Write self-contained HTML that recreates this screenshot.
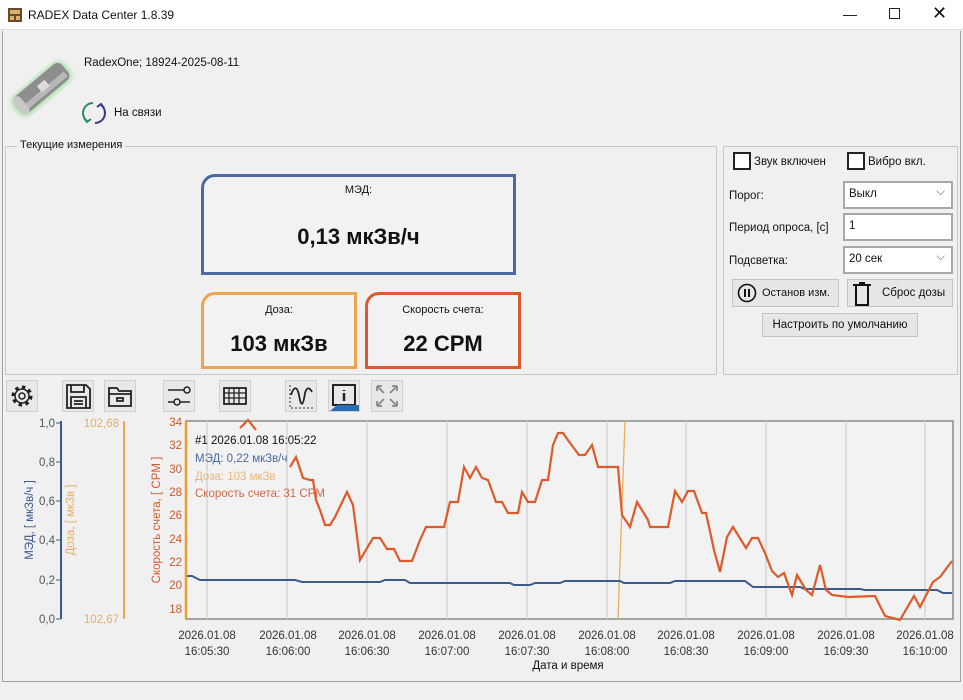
<!DOCTYPE html>
<html><head><meta charset="utf-8"><style>
*{box-sizing:border-box;margin:0;padding:0}
body{width:963px;height:700px;background:#f0f0f0;font-family:"Liberation Sans","DejaVu Sans",sans-serif;font-size:11.5px;color:#111;position:relative;overflow:hidden}
.abs{position:absolute;white-space:nowrap}
.title{left:0;top:0;width:963px;height:30px;background:#fff;border-bottom:1px solid #ddd}
.frame{left:2px;top:31px;width:959px;height:651px;border:1px solid #a0a0a0;border-top:none}
.group{border:1px solid #c8c8c8}
.card{background:#f2f2f2;text-align:center}
.inp{background:#fff;border:2px solid #a8a8a8;font-size:11.5px;padding:5px 4px}
.btn{background:#e6e6e6;border:1px solid #c4c4c4;font-size:11.5px}
.chk{width:18px;height:18px;border:2px solid #222;background:#fff}
.tb{width:32px;height:32px;background:#e8e8e8;border:1px solid #d0d0d0}
</style></head><body>
<div class="abs title">
 <svg class="abs" style="left:8px;top:8px" width="14" height="14"><rect x="0" y="0" width="14" height="14" fill="#6b4a2a"/><rect x="2" y="2" width="10" height="4" fill="#d8b070"/><rect x="2" y="8" width="4" height="4" fill="#d8b070"/><rect x="8" y="8" width="4" height="4" fill="#d8b070"/></svg>
 <div class="abs" style="left:28px;top:8px;font-size:12px">RADEX Data Center 1.8.39</div>
 <div class="abs" style="left:843px;top:6px;font-size:14px">—</div>
 <div class="abs" style="left:889px;top:8px;width:11px;height:11px;border:1px solid #222"></div>
 <div class="abs" style="left:932px;top:3px;font-size:18px">✕</div>
</div>
<div class="abs frame"></div>
<!-- device -->
<svg class="abs" style="left:6px;top:50px" width="70" height="75">
 <defs><filter id="g"><feGaussianBlur stdDeviation="3"/></filter></defs>
 <g transform="rotate(50 35 38)">
 <rect x="24" y="5" width="24" height="66" rx="9" fill="#7cd57c" filter="url(#g)" opacity=".7"/>
 <rect x="25" y="7" width="21" height="62" rx="6" fill="#8e8e8e"/>
 <rect x="37" y="10" width="6" height="54" fill="#b8b8b8"/>
 <rect x="31" y="30" width="8" height="10" fill="#dcdcdc"/>
 <rect x="25" y="60" width="21" height="9" rx="4" fill="#c8c8c8"/>
 </g>
</svg>
<div class="abs" style="left:84px;top:57px">RadexOne; 18924-2025-08-11</div>
<svg class="abs" style="left:81px;top:100px" width="26" height="26"><path d="M12 3 A10 10 0 0 0 6 21" fill="none" stroke="#2a8a6a" stroke-width="2"/><path d="M3 18 L6 22 L10 19" fill="none" stroke="#2a8a6a" stroke-width="2"/><path d="M14 23 A10 10 0 0 0 20 5" fill="none" stroke="#3a3a8a" stroke-width="2"/><path d="M23 8 L20 4 L16 7" fill="none" stroke="#3a3a8a" stroke-width="2"/></svg>
<div class="abs" style="left:114px;top:107px">На связи</div>
<!-- current group -->
<div class="abs group" style="left:5px;top:146px;width:712px;height:229px"></div>
<div class="abs" style="left:17px;top:139px;background:#f0f0f0;padding:0 3px;font-size:11px">Текущие измерения</div>
<div class="abs card" style="left:201px;top:174px;width:315px;height:101px;border:3px solid #4a6aa0;border-top-left-radius:14px">
 <div style="margin-top:7px;font-size:11px">МЭД:</div>
 <div style="margin-top:28px;font-size:22px;font-weight:bold">0,13 мкЗв/ч</div></div>
<div class="abs card" style="left:201px;top:292px;width:156px;height:77px;border:3px solid #eca54e;border-top-left-radius:14px">
 <div style="margin-top:9px;font-size:11px">Доза:</div>
 <div style="margin-top:15px;font-size:22px;font-weight:bold">103 мкЗв</div></div>
<div class="abs card" style="left:365px;top:292px;width:156px;height:77px;border:3px solid #dc5a2c;border-top-left-radius:14px">
 <div style="margin-top:9px;font-size:11px">Скорость счета:</div>
 <div style="margin-top:15px;font-size:22px;font-weight:bold">22 CPM</div></div>
<!-- settings -->
<div class="abs group" style="left:723px;top:146px;width:235px;height:229px"></div>
<div class="abs chk" style="left:733px;top:152px"></div><div class="abs" style="left:754px;top:156px">Звук включен</div>
<div class="abs chk" style="left:847px;top:152px"></div><div class="abs" style="left:868px;top:156px">Вибро вкл.</div>
<div class="abs" style="left:729px;top:190px">Порог:</div>
<div class="abs inp" style="left:843px;top:181px;width:110px;height:28px">Выкл<span style="position:absolute;right:6px;top:3px;color:#666">⌵</span></div>
<div class="abs" style="left:729px;top:222px">Период опроса, [с]</div>
<div class="abs inp" style="left:843px;top:213px;width:110px;height:28px">1</div>
<div class="abs" style="left:729px;top:255px">Подсветка:</div>
<div class="abs inp" style="left:843px;top:246px;width:110px;height:28px">20 сек<span style="position:absolute;right:6px;top:3px;color:#666">⌵</span></div>
<div class="abs btn" style="left:732px;top:279px;width:107px;height:28px">
 <svg class="abs" style="left:4px;top:3px" width="20" height="20"><circle cx="10" cy="10" r="8.5" fill="none" stroke="#111" stroke-width="1.6"/><rect x="7" y="6" width="2" height="8" fill="#111"/><rect x="11" y="6" width="2" height="8" fill="#111"/></svg>
 <span class="abs" style="left:29px;top:7px;font-size:11px">Останов изм.</span></div>
<div class="abs btn" style="left:847px;top:279px;width:106px;height:28px">
 <svg class="abs" style="left:2px;top:1px" width="24" height="26"><path d="M3 4 H21 M6 4 V24 H18 V4 M9 2 H15" fill="none" stroke="#111" stroke-width="2"/></svg>
 <span class="abs" style="left:34px;top:7px">Сброс дозы</span></div>
<div class="abs btn" style="left:762px;top:313px;width:156px;height:24px;text-align:center;padding-top:5px">Настроить по умолчанию</div>
<!-- toolbar -->
<div class="abs tb" style="left:6px;top:380px"><svg width="30" height="30"><circle cx="15" cy="15" r="9" fill="none" stroke="#222" stroke-width="3" stroke-dasharray="3.5 3.5"/><circle cx="15" cy="15" r="7" fill="none" stroke="#222" stroke-width="1.5"/><circle cx="15" cy="15" r="3" fill="none" stroke="#222" stroke-width="1.5"/></svg></div>
<div class="abs tb" style="left:62px;top:380px"><svg width="30" height="30"><path d="M4 4 H23 L27 8 V27 H4 Z M8 4 V11 H21 V4 M8 27 V16 H23 V27 M11 20 H20 M11 23 H20" fill="none" stroke="#222" stroke-width="1.8"/></svg></div>
<div class="abs tb" style="left:104px;top:380px"><svg width="30" height="30"><path d="M4 7 H12 L14 10 H26 V25 H4 Z M4 13 H26 M12 17 H18 V20 H12 Z" fill="none" stroke="#222" stroke-width="1.8"/></svg></div>
<div class="abs tb" style="left:163px;top:380px"><svg width="30" height="30"><path d="M4 9 H20 M4 21 H10 M16 21 H26" stroke="#222" stroke-width="1.5"/><circle cx="23" cy="9" r="3" fill="none" stroke="#222" stroke-width="1.5"/><circle cx="13" cy="21" r="3" fill="none" stroke="#222" stroke-width="1.5"/></svg></div>
<div class="abs tb" style="left:219px;top:380px"><svg width="30" height="30"><rect x="4" y="7" width="22" height="16" fill="none" stroke="#222" stroke-width="1.8"/><path d="M4 12 H26 M4 17 H26 M9 7 V23 M14 7 V23 M19 7 V23" stroke="#222" stroke-width="1.3"/></svg></div>
<div class="abs tb" style="left:285px;top:380px"><svg width="30" height="30"><path d="M4 4 V27 H27" fill="none" stroke="#333" stroke-width="1" stroke-dasharray="2 2"/><path d="M5 14 C8 5 11 5 13 14 C15 26 17 26 19 12 C21 5 24 7 26 11" fill="none" stroke="#222" stroke-width="1.8"/></svg></div>
<div class="abs tb" style="left:328px;top:380px"><svg width="30" height="30"><path d="M4 24 V4 H26 V24 Z" fill="none" stroke="#222" stroke-width="2"/><path d="M15 9 V10 M15 12 V20" stroke="#222" stroke-width="2.5"/><path d="M1 30 L8 24 H30 V30 Z" fill="#2b6cb8"/></svg></div>
<div class="abs tb" style="left:371px;top:380px"><svg width="30" height="30"><path d="M5 5 L12 12 M5 5 H10 M5 5 V10 M25 5 L18 12 M25 5 H20 M25 5 V10 M5 25 L12 18 M5 25 H10 M5 25 V20 M25 25 L18 18 M25 25 H20 M25 25 V20" stroke="#888" stroke-width="1.8" fill="none"/></svg></div>
<!-- chart -->
<svg class="abs" style="left:0;top:410px" width="963" height="265" font-family="Liberation Sans, DejaVu Sans, sans-serif" font-size="11.5">
 <g transform="translate(0,-410)">
 <rect x="186" y="421" width="767" height="198" fill="#f2f2f3" stroke="#8a8a8a" stroke-width="1.5"/>
 <g stroke="#cfcfcf" stroke-width="1.3">
  <path d="M207 421V619M287 421V619M367 421V619M447 421V619M527 421V619M607 421V619M686 421V619M766 421V619M846 421V619M925 421V619"/>
 </g>
 <path d="M625 421 L618 619" stroke="#e8b060" stroke-width="1.3"/>
 <path d="M186 576 L192 576 L200 580 L295 580 L302 582 L380 582 L385 580 L405 580 L410 583 L510 583 L514 585 L530 585 L535 583 L560 583 L565 581 L620 581 L624 583 L670 583 L675 581 L745 581 L753 587 L800 587 L805 589 L860 589 L865 590 L937 590 L943 593 L952 593" fill="none" stroke="#3c5a8c" stroke-width="2"/>
 <path d="M240 428 L248 420 L256 430 M290 467 L296 457 L303 478 L310 480 L313 480 L316 500 L320 510 L325 525 L330 525 L335 517 L347 492 L353 505 L360 560 L373 538 L380 538 L387 549 L394 549 L400 561 L412 561 L420 540 L426 527 L444 527 L450 502 L458 502 L464 467 L470 478 L476 467 L482 478 L488 480 L496 502 L502 502 L508 513 L518 513 L522 492 L528 502 L535 502 L542 480 L548 480 L553 445 L558 433 L563 433 L570 443 L579 455 L585 455 L592 445 L598 467 L618 467 L622 515 L630 527 L637 502 L648 520 L650 527 L668 527 L675 491 L682 502 L688 491 L694 491 L702 513 L706 513 L714 550 L720 572 L727 537 L733 527 L746 548 L752 538 L758 538 L765 553 L772 571 L778 577 L784 573 L792 595 L797 575 L806 590 L812 595 L820 565 L826 590 L832 595 L848 597 L875 596 L885 616 L900 620 L914 596 L920 607 L933 582 L940 577 L952 561" fill="none" stroke="#dd5a2a" stroke-width="2.2"/>
 <path d="M61 421 V619" stroke="#3c5a8c" stroke-width="2"/>
 <g stroke="#3c5a8c" stroke-width="1"><path d="M56 423H61M56 462H61M56 501H61M56 540H61M56 580H61M56 619H61"/></g>
 <g fill="#555" text-anchor="end"><text x="55" y="427">1,0</text><text x="55" y="466">0,8</text><text x="55" y="505">0,6</text><text x="55" y="544">0,4</text><text x="55" y="584">0,2</text><text x="55" y="623">0,0</text></g>
 <text transform="translate(33,520) rotate(-90)" text-anchor="middle" fill="#3c5a8c">МЭД, [ мкЗв/ч ]</text>
 <path d="M124 421 V619" stroke="#e8a850" stroke-width="2"/>
 <g fill="#e8b060" text-anchor="end"><text x="119" y="427">102,68</text><text x="119" y="623">102,67</text></g>
 <text transform="translate(74,520) rotate(-90)" text-anchor="middle" fill="#e8b060">Доза, [ мкЗв ]</text>
 <path d="M186 421 V619" stroke="#e8a030" stroke-width="2.5"/>
 <g fill="#c85a30" text-anchor="end"><text x="182" y="426">34</text><text x="182" y="449">32</text><text x="182" y="473">30</text><text x="182" y="496">28</text><text x="182" y="519">26</text><text x="182" y="543">24</text><text x="182" y="566">22</text><text x="182" y="589">20</text><text x="182" y="613">18</text></g>
 <text transform="translate(160,520) rotate(-90)" text-anchor="middle" fill="#d05a2a">Скорость счета, [ CPM ]</text>
 <text x="195" y="444" fill="#111">#1 2026.01.08 16:05:22</text>
 <text x="195" y="462" fill="#4a6aa0">МЭД: 0,22 мкЗв/ч</text>
 <text x="195" y="480" fill="#e8b878">Доза: 103 мкЗв</text>
 <text x="195" y="497" fill="#d06a4a">Скорость счета: 31 CPM</text>
 <g fill="#333" text-anchor="middle">
  <text x="207" y="639">2026.01.08</text><text x="207" y="655">16:05:30</text>
  <text x="288" y="639">2026.01.08</text><text x="288" y="655">16:06:00</text>
  <text x="367" y="639">2026.01.08</text><text x="367" y="655">16:06:30</text>
  <text x="447" y="639">2026.01.08</text><text x="447" y="655">16:07:00</text>
  <text x="527" y="639">2026.01.08</text><text x="527" y="655">16:07:30</text>
  <text x="607" y="639">2026.01.08</text><text x="607" y="655">16:08:00</text>
  <text x="686" y="639">2026.01.08</text><text x="686" y="655">16:08:30</text>
  <text x="766" y="639">2026.01.08</text><text x="766" y="655">16:09:00</text>
  <text x="846" y="639">2026.01.08</text><text x="846" y="655">16:09:30</text>
  <text x="925" y="639">2026.01.08</text><text x="925" y="655">16:10:00</text>
  <text x="568" y="669" fill="#111">Дата и время</text>
 </g>
 </g>
</svg>
</body></html>
